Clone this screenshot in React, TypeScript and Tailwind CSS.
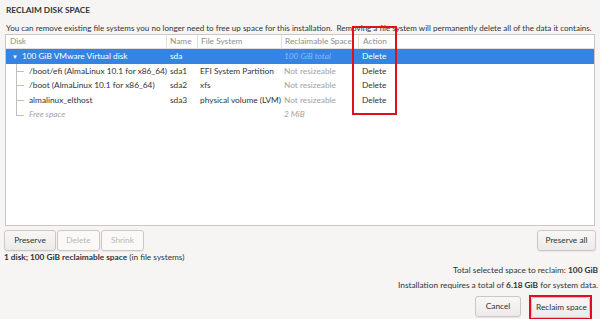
import React from "react";

type Row = {
  disk: string;
  name: string;
  fs: string;
  space: string;
  action: string;
  kind: "disk" | "part" | "free";
  last?: boolean;
};

const rows: Row[] = [
  { disk: "100 GiB VMware Virtual disk", name: "sda", fs: "", space: "100 GiB total", action: "Delete", kind: "disk" },
  { disk: "/boot/efi (AlmaLinux 10.1 for x86_64)", name: "sda1", fs: "EFI System Partition", space: "Not resizeable", action: "Delete", kind: "part" },
  { disk: "/boot (AlmaLinux 10.1 for x86_64)", name: "sda2", fs: "xfs", space: "Not resizeable", action: "Delete", kind: "part" },
  { disk: "almalinux_elthost", name: "sda3", fs: "physical volume (LVM)", space: "Not resizeable", action: "Delete", kind: "part" },
  { disk: "Free space", name: "", fs: "", space: "2 MiB", action: "", kind: "free", last: true },
];

const cols = "grid grid-cols-[160px_31px_84px_77px_1fr]";

function Btn({ children, disabled, className = "" }: { children: React.ReactNode; disabled?: boolean; className?: string }) {
  return (
    <button
      className={`h-[21px] whitespace-nowrap rounded-[3px] border border-[#cdc7c2] px-1 text-[8.3px] shadow-[0_1px_1px_rgba(0,0,0,0.06)] ${
        disabled ? "bg-[#faf9f8] text-[#b8b8b8]" : "bg-gradient-to-b from-[#f8f7f6] to-[#edebe9] text-[#2e3436]"
      } ${className}`}
    >
      {children}
    </button>
  );
}

export default function App() {
  return (
    <div className="relative h-[319px] w-[600px] overflow-hidden bg-[#f6f5f4] font-['Lato',sans-serif] text-[#2e3436]">
      <div className="px-[6px] pt-[4px] text-[8.3px] font-bold leading-[12px]">RECLAIM DISK SPACE</div>
      <div className="px-[6px] pt-[6px] text-[8.05px] leading-[12px] whitespace-nowrap">
        You can remove existing file systems you no longer need to free up space for this installation.&nbsp; Removing a file system will permanently delete all of the data it contains.
      </div>

      {/* table */}
      <div className="relative mx-[5px] h-[192px] border border-[#cdc7c2] bg-white text-[8.3px]">
        <div className={`${cols} h-[14px] items-center border-b border-[#e1dedb] text-[#8b8e8f]`}>
          <div className="pl-[4px]">Disk</div>
          <div className="h-full border-l border-[#e1dedb] pl-[3px] leading-[13px]">Name</div>
          <div className="h-full border-l border-[#e1dedb] pl-[3px] leading-[13px]">File System</div>
          <div className="h-full overflow-hidden whitespace-nowrap border-l border-[#e1dedb] pl-[3px] leading-[13px]">Reclaimable Space</div>
          <div className="h-full border-l border-[#e1dedb] pl-[4px] leading-[13px]">Action</div>
        </div>
        {rows.map((r, i) => {
          const sel = r.kind === "disk";
          return (
            <div key={i} className={`${cols} h-[14.6px] items-center ${sel ? "bg-[#3584e4] text-white" : ""}`}>
              <div className="relative flex h-full items-center whitespace-nowrap">
                {r.kind === "disk" ? (
                  <>
                    <span className="ml-[6px] mr-[4px] text-[6px]">▼</span>
                    <span>{r.disk}</span>
                  </>
                ) : (
                  <>
                    <span className={`absolute left-[10px] top-0 w-px bg-[#c0bdba] ${r.last ? "h-1/2" : "h-full"}`} />
                    <span className="absolute left-[10px] top-1/2 h-px w-[8px] bg-[#c0bdba]" />
                    <span className={`ml-[23px] ${r.kind === "free" ? "italic text-[#a0a3a4]" : ""}`}>{r.disk}</span>
                  </>
                )}
              </div>
              <div className="pl-[4px]">{r.name}</div>
              <div className="whitespace-nowrap pl-[3px]">{r.fs}</div>
              <div
                className={`whitespace-nowrap pl-[3px] ${
                  sel ? "italic text-[#8fb8ee]" : r.kind === "free" ? "italic text-[#a0a3a4]" : "text-[#a0a3a4]"
                }`}
              >
                {r.space}
              </div>
              <div className="pl-[4px]">{r.action}</div>
            </div>
          );
        })}
        {/* highlight annotation */}
        <div className="absolute left-[346px] top-[-9px] h-[89px] w-[45px] border-2 border-[#e0101a]" />
      </div>

      <div className="mx-[4px] mt-[4px] flex items-center">
        <Btn className="w-[52px]">Preserve</Btn>
        <Btn disabled className="ml-[1px] w-[43px]">Delete</Btn>
        <Btn disabled className="ml-[1px] w-[43px]">Shrink</Btn>
        <Btn className="ml-auto w-[59px]">Preserve all</Btn>
      </div>

      <div className="px-[4px] text-[8.3px] leading-[12px]">
        <span className="font-bold">1 disk; 100 GiB reclaimable space</span> (in file systems)
      </div>

      <div className="pr-[2px] pt-[1px] text-right text-[8.3px] leading-[12px]">
        Total selected space to reclaim: <span className="font-bold">100 GiB</span>
      </div>
      <div className="pr-[2px] pt-[3px] text-right text-[8.3px] leading-[12px]">
        Installation requires a total of <span className="font-bold">6.18 GiB</span> for system data.
      </div>

      <div className="mt-[4px] flex items-start justify-end pr-[8px]">
        <Btn className="mt-[1px] h-[20px] w-[46px]">Cancel</Btn>
        <div className="ml-[8px] flex border-2 border-[#e0101a]">
          <Btn className="h-[17px] w-[59px]">Reclaim space</Btn>
        </div>
      </div>
    </div>
  );
}
